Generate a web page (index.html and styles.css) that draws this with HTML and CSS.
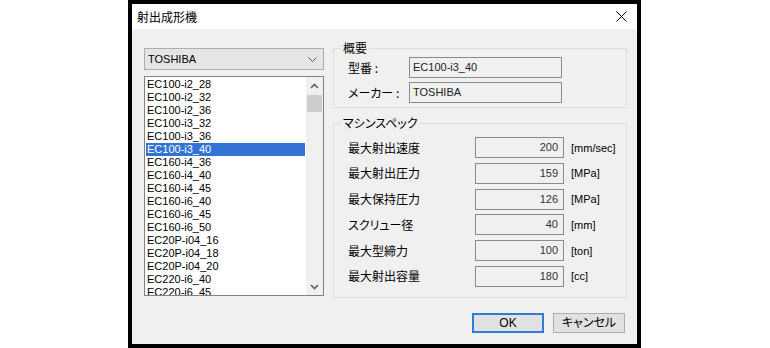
FILE: index.html
```html
<!DOCTYPE html>
<html lang="ja">
<head>
<meta charset="utf-8">
<title>射出成形機</title>
<link rel="stylesheet" href="styles.css">
</head>
<body>
<div class="window">
  <div class="titlebar">
    <span class="title">射出成形機</span>
    <svg class="close" width="11" height="11" viewBox="0 0 11 11"><path d="M0.5 0.5 L10.5 10.5 M10.5 0.5 L0.5 10.5" stroke="#000" stroke-width="1" fill="none"/></svg>
  </div>
  <div class="client">
    <div class="left">
      <div class="combo">
        <span class="combo-text">TOSHIBA</span>
        <svg class="chev" width="9" height="5" viewBox="0 0 9 5"><path d="M0.5 0.5 L4.5 4.5 L8.5 0.5" stroke="#555" stroke-width="1" fill="none"/></svg>
      </div>
      <div class="listbox">
        <ul class="items">
          <li>EC100-i2_28</li>
          <li>EC100-i2_32</li>
          <li>EC100-i2_36</li>
          <li>EC100-i3_32</li>
          <li>EC100-i3_36</li>
          <li class="selected">EC100-i3_40</li>
          <li>EC160-i4_36</li>
          <li>EC160-i4_40</li>
          <li>EC160-i4_45</li>
          <li>EC160-i6_40</li>
          <li>EC160-i6_45</li>
          <li>EC160-i6_50</li>
          <li>EC20P-i04_16</li>
          <li>EC20P-i04_18</li>
          <li>EC20P-i04_20</li>
          <li>EC220-i6_40</li>
          <li>EC220-i6_45</li>
        </ul>
        <div class="scrollbar">
          <div class="sb-btn"><svg width="9" height="6" viewBox="0 0 9 6"><path d="M1 5 L4.5 1.5 L8 5" stroke="#606060" stroke-width="1.6" fill="none"/></svg></div>
          <div class="track"><div class="thumb"></div></div>
          <div class="sb-btn"><svg width="9" height="6" viewBox="0 0 9 6"><path d="M1 1 L4.5 4.5 L8 1" stroke="#606060" stroke-width="1.6" fill="none"/></svg></div>
        </div>
      </div>
    </div>
    <div class="right">
      <fieldset class="group summary">
        <legend>概要</legend>
        <div class="summary-grid">
          <span class="label">型番 :</span>
          <span class="field">EC100-i3_40</span>
          <span class="label">メーカー :</span>
          <span class="field">TOSHIBA</span>
        </div>
      </fieldset>
      <fieldset class="group spec">
        <legend>マシンスペック</legend>
        <div class="spec-grid">
          <span class="label">最大射出速度</span><span class="field num">200</span><span class="unit">[mm/sec]</span>
          <span class="label">最大射出圧力</span><span class="field num">159</span><span class="unit">[MPa]</span>
          <span class="label">最大保持圧力</span><span class="field num">126</span><span class="unit">[MPa]</span>
          <span class="label">スクリュー径</span><span class="field num">40</span><span class="unit">[mm]</span>
          <span class="label">最大型締力</span><span class="field num">100</span><span class="unit">[ton]</span>
          <span class="label">最大射出容量</span><span class="field num">180</span><span class="unit">[cc]</span>
        </div>
      </fieldset>
    </div>
    <div class="buttons">
      <button class="btn default">OK</button>
      <button class="btn">キャンセル</button>
    </div>
  </div>
</div>
</body>
</html>
```

FILE: styles.css
```css
html, body {
  margin: 0;
  padding: 0;
  background: #ffffff;
}

body {
  font-family: "Liberation Sans", "Noto Sans CJK JP", sans-serif;
  font-size: 11px;
  color: #000;
  font-feature-settings: "palt";
}

.window {
  margin-left: 128px;
  width: 505px;
  height: 340px;
  border: 4px solid #000;
  background: #f0f0f0;
  display: flex;
  flex-direction: column;
}

.titlebar {
  height: 25px;
  background: #ffffff;
  display: flex;
  align-items: center;
  justify-content: space-between;
  padding: 0 10px 0 5px;
  flex: none;
}

.title {
  font-family: "Noto Sans CJK JP", sans-serif;
  font-size: 12px;
  line-height: 14px;
}

.close {
  display: block;
}

.client {
  display: grid;
  grid-template-columns: 180px 294px;
  column-gap: 9px;
  padding: 12px 10px 11px 12px;
  align-items: start;
}

.left {
  padding-top: 7px;
  display: flex;
  flex-direction: column;
  gap: 6px;
}

.combo {
  box-sizing: border-box;
  height: 22px;
  border: 1px solid #adadad;
  background: #e5e5e5;
  display: flex;
  align-items: center;
  justify-content: space-between;
  padding: 0 6px 0 3px;
}

.combo-text {
  line-height: 13px;
}

.chev {
  display: block;
}

.listbox {
  box-sizing: border-box;
  height: 220px;
  border: 1px solid #828282;
  background: #fff;
  display: flex;
  overflow: hidden;
}

.items {
  list-style: none;
  margin: 0;
  padding: 1px;
  flex: 1;
  overflow: hidden;
}

.items li {
  height: 13px;
  line-height: 13px;
  padding-left: 1px;
  white-space: nowrap;
}

.items li.selected {
  background: #3373d3;
  color: #fff;
}

.scrollbar {
  width: 17px;
  flex: none;
  background: #f0f0f0;
  display: flex;
  flex-direction: column;
}

.sb-btn {
  height: 17px;
  display: flex;
  align-items: center;
  justify-content: center;
  flex: none;
}

.track {
  flex: 1;
  padding: 1px;
}

.thumb {
  height: 17px;
  background: #cdcdcd;
}

.right {
  display: flex;
  flex-direction: column;
  gap: 8px;
}

.group {
  margin: 0;
  border: 1px solid #dcdcdc;
  min-width: 0;
}

.group legend {
  font-family: "Noto Sans CJK JP", sans-serif;
  font-size: 12px;
  line-height: 14px;
  padding: 0 2px;
  margin-left: 7px;
}

.summary {
  padding: 2px 0 4px 0;
}

.spec {
  padding: 7px 0 10px 0;
}

.summary-grid {
  display: grid;
  grid-template-columns: 61px 153px;
  row-gap: 4px;
  align-items: center;
  padding-left: 14px;
}

.spec-grid {
  display: grid;
  grid-template-columns: 127px 89px auto;
  row-gap: 4.8px;
  align-items: center;
  padding-left: 14px;
}

.label {
  font-family: "Noto Sans CJK JP", sans-serif;
  font-size: 12px;
  line-height: 14px;
  white-space: nowrap;
}

.field {
  box-sizing: border-box;
  height: 21px;
  border: 1px solid #8a8a8a;
  background: #f0f0f0;
  line-height: 19px;
  padding: 0 3px;
  color: #1e1e1e;
  white-space: nowrap;
  overflow: hidden;
}

.field.num {
  text-align: right;
  padding-right: 5px;
  color: #333;
}

.unit {
  padding-left: 7px;
  white-space: nowrap;
}

.buttons {
  grid-column: 1 / -1;
  margin-top: 15px;
  display: flex;
  justify-content: flex-end;
  gap: 9px;
  padding-right: 2px;
}

.btn {
  box-sizing: border-box;
  width: 72px;
  height: 20px;
  margin: 0;
  padding: 0;
  border: 1px solid #adadad;
  background: #e1e1e1;
  font-family: "Liberation Sans", "Noto Sans CJK JP", sans-serif;
  font-feature-settings: "palt";
  font-size: 12px;
  line-height: 16px;
  color: #000;
}

.btn.default {
  border: 2px solid #2f7bd9;
}
```
